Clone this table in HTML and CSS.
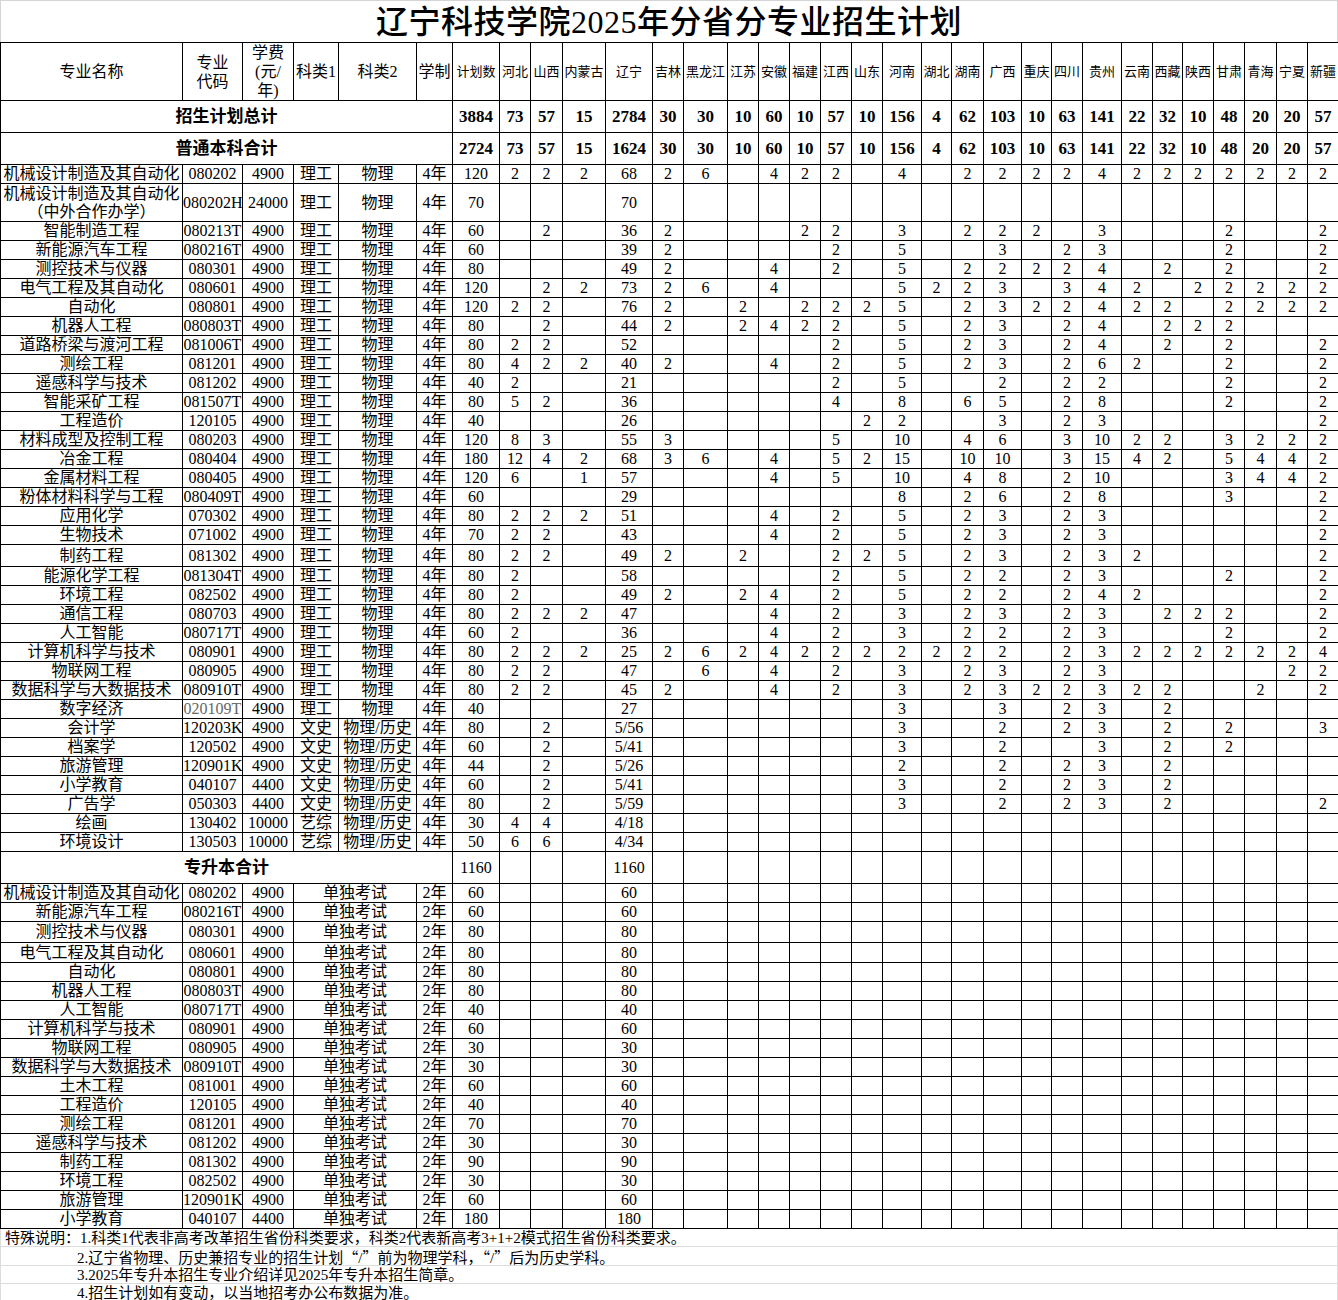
FILE: index.html
```html
<!DOCTYPE html>
<html lang="zh-CN">
<head>
<meta charset="utf-8">
<title>辽宁科技学院2025年分省分专业招生计划</title>
<link rel="stylesheet" href="styles.css">
</head>
<body>
<div class="page">
<div class="title">辽宁科技学院2025年分省分专业招生计划</div>
<table class="plan">
<colgroup>
<col class="w182"><col class="w60"><col class="w51"><col class="w45"><col class="w78"><col class="w36"><col class="w47">
<col class="w31"><col class="w32"><col class="w43"><col class="w47"><col class="w31"><col class="w44"><col class="w31"><col class="w31"><col class="w31"><col class="w31"><col class="w31">
<col class="w39"><col class="w30"><col class="w32"><col class="w38"><col class="w30"><col class="w31"><col class="w39"><col class="w31"><col class="w30"><col class="w31"><col class="w31"><col class="w32"><col class="w31"><col class="w31">
</colgroup>
<tr class="head"><th>专业名称</th><th>专业<br>代码</th><th>学费<br>(元/<br>年)</th><th>科类1</th><th>科类2</th><th>学制</th><th class="p">计划数</th><th class="p">河北</th><th class="p">山西</th><th class="p">内蒙古</th><th class="p">辽宁</th><th class="p">吉林</th><th class="p">黑龙江</th><th class="p">江苏</th><th class="p">安徽</th><th class="p">福建</th><th class="p">江西</th><th class="p">山东</th><th class="p">河南</th><th class="p">湖北</th><th class="p">湖南</th><th class="p">广西</th><th class="p">重庆</th><th class="p">四川</th><th class="p">贵州</th><th class="p">云南</th><th class="p">西藏</th><th class="p">陕西</th><th class="p">甘肃</th><th class="p">青海</th><th class="p">宁夏</th><th class="p">新疆</th></tr>
<tr class="sum"><td colspan="6" class="label">招生计划总计</td><td>3884</td><td>73</td><td>57</td><td>15</td><td>2784</td><td>30</td><td>30</td><td>10</td><td>60</td><td>10</td><td>57</td><td>10</td><td>156</td><td>4</td><td>62</td><td>103</td><td>10</td><td>63</td><td>141</td><td>22</td><td>32</td><td>10</td><td>48</td><td>20</td><td>20</td><td>57</td></tr>
<tr class="sum"><td colspan="6" class="label">普通本科合计</td><td>2724</td><td>73</td><td>57</td><td>15</td><td>1624</td><td>30</td><td>30</td><td>10</td><td>60</td><td>10</td><td>57</td><td>10</td><td>156</td><td>4</td><td>62</td><td>103</td><td>10</td><td>63</td><td>141</td><td>22</td><td>32</td><td>10</td><td>48</td><td>20</td><td>20</td><td>57</td></tr>
<tr><td>机械设计制造及其自动化</td><td>080202</td><td>4900</td><td>理工</td><td>物理</td><td>4年</td><td>120</td><td>2</td><td>2</td><td>2</td><td>68</td><td>2</td><td>6</td><td></td><td>4</td><td>2</td><td>2</td><td></td><td>4</td><td></td><td>2</td><td>2</td><td>2</td><td>2</td><td>4</td><td>2</td><td>2</td><td>2</td><td>2</td><td>2</td><td>2</td><td>2</td></tr>
<tr class="two"><td>机械设计制造及其自动化<br>（中外合作办学）</td><td>080202H</td><td>24000</td><td>理工</td><td>物理</td><td>4年</td><td>70</td><td></td><td></td><td></td><td>70</td><td></td><td></td><td></td><td></td><td></td><td></td><td></td><td></td><td></td><td></td><td></td><td></td><td></td><td></td><td></td><td></td><td></td><td></td><td></td><td></td><td></td></tr>
<tr><td>智能制造工程</td><td>080213T</td><td>4900</td><td>理工</td><td>物理</td><td>4年</td><td>60</td><td></td><td>2</td><td></td><td>36</td><td>2</td><td></td><td></td><td></td><td>2</td><td>2</td><td></td><td>3</td><td></td><td>2</td><td>2</td><td>2</td><td></td><td>3</td><td></td><td></td><td></td><td>2</td><td></td><td></td><td>2</td></tr>
<tr><td>新能源汽车工程</td><td>080216T</td><td>4900</td><td>理工</td><td>物理</td><td>4年</td><td>60</td><td></td><td></td><td></td><td>39</td><td>2</td><td></td><td></td><td></td><td></td><td>2</td><td></td><td>5</td><td></td><td></td><td>3</td><td></td><td>2</td><td>3</td><td></td><td></td><td></td><td>2</td><td></td><td></td><td>2</td></tr>
<tr><td>测控技术与仪器</td><td>080301</td><td>4900</td><td>理工</td><td>物理</td><td>4年</td><td>80</td><td></td><td></td><td></td><td>49</td><td>2</td><td></td><td></td><td>4</td><td></td><td>2</td><td></td><td>5</td><td></td><td>2</td><td>2</td><td>2</td><td>2</td><td>4</td><td></td><td>2</td><td></td><td>2</td><td></td><td></td><td>2</td></tr>
<tr><td>电气工程及其自动化</td><td>080601</td><td>4900</td><td>理工</td><td>物理</td><td>4年</td><td>120</td><td></td><td>2</td><td>2</td><td>73</td><td>2</td><td>6</td><td></td><td>4</td><td></td><td></td><td></td><td>5</td><td>2</td><td>2</td><td>3</td><td></td><td>3</td><td>4</td><td>2</td><td></td><td>2</td><td>2</td><td>2</td><td>2</td><td>2</td></tr>
<tr><td>自动化</td><td>080801</td><td>4900</td><td>理工</td><td>物理</td><td>4年</td><td>120</td><td>2</td><td>2</td><td></td><td>76</td><td>2</td><td></td><td>2</td><td></td><td>2</td><td>2</td><td>2</td><td>5</td><td></td><td>2</td><td>3</td><td>2</td><td>2</td><td>4</td><td>2</td><td>2</td><td></td><td>2</td><td>2</td><td>2</td><td>2</td></tr>
<tr><td>机器人工程</td><td>080803T</td><td>4900</td><td>理工</td><td>物理</td><td>4年</td><td>80</td><td></td><td>2</td><td></td><td>44</td><td>2</td><td></td><td>2</td><td>4</td><td>2</td><td>2</td><td></td><td>5</td><td></td><td>2</td><td>3</td><td></td><td>2</td><td>4</td><td></td><td>2</td><td>2</td><td>2</td><td></td><td></td><td></td></tr>
<tr><td>道路桥梁与渡河工程</td><td>081006T</td><td>4900</td><td>理工</td><td>物理</td><td>4年</td><td>80</td><td>2</td><td>2</td><td></td><td>52</td><td></td><td></td><td></td><td></td><td></td><td>2</td><td></td><td>5</td><td></td><td>2</td><td>3</td><td></td><td>2</td><td>4</td><td></td><td>2</td><td></td><td>2</td><td></td><td></td><td>2</td></tr>
<tr><td>测绘工程</td><td>081201</td><td>4900</td><td>理工</td><td>物理</td><td>4年</td><td>80</td><td>4</td><td>2</td><td>2</td><td>40</td><td>2</td><td></td><td></td><td>4</td><td></td><td>2</td><td></td><td>5</td><td></td><td>2</td><td>3</td><td></td><td>2</td><td>6</td><td>2</td><td></td><td></td><td>2</td><td></td><td></td><td>2</td></tr>
<tr><td>遥感科学与技术</td><td>081202</td><td>4900</td><td>理工</td><td>物理</td><td>4年</td><td>40</td><td>2</td><td></td><td></td><td>21</td><td></td><td></td><td></td><td></td><td></td><td>2</td><td></td><td>5</td><td></td><td></td><td>2</td><td></td><td>2</td><td>2</td><td></td><td></td><td></td><td>2</td><td></td><td></td><td>2</td></tr>
<tr><td>智能采矿工程</td><td>081507T</td><td>4900</td><td>理工</td><td>物理</td><td>4年</td><td>80</td><td>5</td><td>2</td><td></td><td>36</td><td></td><td></td><td></td><td></td><td></td><td>4</td><td></td><td>8</td><td></td><td>6</td><td>5</td><td></td><td>2</td><td>8</td><td></td><td></td><td></td><td>2</td><td></td><td></td><td>2</td></tr>
<tr><td>工程造价</td><td>120105</td><td>4900</td><td>理工</td><td>物理</td><td>4年</td><td>40</td><td></td><td></td><td></td><td>26</td><td></td><td></td><td></td><td></td><td></td><td></td><td>2</td><td>2</td><td></td><td></td><td>3</td><td></td><td>2</td><td>3</td><td></td><td></td><td></td><td></td><td></td><td></td><td>2</td></tr>
<tr><td>材料成型及控制工程</td><td>080203</td><td>4900</td><td>理工</td><td>物理</td><td>4年</td><td>120</td><td>8</td><td>3</td><td></td><td>55</td><td>3</td><td></td><td></td><td></td><td></td><td>5</td><td></td><td>10</td><td></td><td>4</td><td>6</td><td></td><td>3</td><td>10</td><td>2</td><td>2</td><td></td><td>3</td><td>2</td><td>2</td><td>2</td></tr>
<tr><td>冶金工程</td><td>080404</td><td>4900</td><td>理工</td><td>物理</td><td>4年</td><td>180</td><td>12</td><td>4</td><td>2</td><td>68</td><td>3</td><td>6</td><td></td><td>4</td><td></td><td>5</td><td>2</td><td>15</td><td></td><td>10</td><td>10</td><td></td><td>3</td><td>15</td><td>4</td><td>2</td><td></td><td>5</td><td>4</td><td>4</td><td>2</td></tr>
<tr><td>金属材料工程</td><td>080405</td><td>4900</td><td>理工</td><td>物理</td><td>4年</td><td>120</td><td>6</td><td></td><td>1</td><td>57</td><td></td><td></td><td></td><td>4</td><td></td><td>5</td><td></td><td>10</td><td></td><td>4</td><td>8</td><td></td><td>2</td><td>10</td><td></td><td></td><td></td><td>3</td><td>4</td><td>4</td><td>2</td></tr>
<tr><td>粉体材料科学与工程</td><td>080409T</td><td>4900</td><td>理工</td><td>物理</td><td>4年</td><td>60</td><td></td><td></td><td></td><td>29</td><td></td><td></td><td></td><td></td><td></td><td></td><td></td><td>8</td><td></td><td>2</td><td>6</td><td></td><td>2</td><td>8</td><td></td><td></td><td></td><td>3</td><td></td><td></td><td>2</td></tr>
<tr><td>应用化学</td><td>070302</td><td>4900</td><td>理工</td><td>物理</td><td>4年</td><td>80</td><td>2</td><td>2</td><td>2</td><td>51</td><td></td><td></td><td></td><td>4</td><td></td><td>2</td><td></td><td>5</td><td></td><td>2</td><td>3</td><td></td><td>2</td><td>3</td><td></td><td></td><td></td><td></td><td></td><td></td><td>2</td></tr>
<tr><td>生物技术</td><td>071002</td><td>4900</td><td>理工</td><td>物理</td><td>4年</td><td>70</td><td>2</td><td>2</td><td></td><td>43</td><td></td><td></td><td></td><td>4</td><td></td><td>2</td><td></td><td>5</td><td></td><td>2</td><td>3</td><td></td><td>2</td><td>3</td><td></td><td></td><td></td><td></td><td></td><td></td><td>2</td></tr>
<tr class="tall"><td>制药工程</td><td>081302</td><td>4900</td><td>理工</td><td>物理</td><td>4年</td><td>80</td><td>2</td><td>2</td><td></td><td>49</td><td>2</td><td></td><td>2</td><td></td><td></td><td>2</td><td>2</td><td>5</td><td></td><td>2</td><td>3</td><td></td><td>2</td><td>3</td><td>2</td><td></td><td></td><td></td><td></td><td></td><td>2</td></tr>
<tr><td>能源化学工程</td><td>081304T</td><td>4900</td><td>理工</td><td>物理</td><td>4年</td><td>80</td><td>2</td><td></td><td></td><td>58</td><td></td><td></td><td></td><td></td><td></td><td>2</td><td></td><td>5</td><td></td><td>2</td><td>2</td><td></td><td>2</td><td>3</td><td></td><td></td><td></td><td>2</td><td></td><td></td><td>2</td></tr>
<tr><td>环境工程</td><td>082502</td><td>4900</td><td>理工</td><td>物理</td><td>4年</td><td>80</td><td>2</td><td></td><td></td><td>49</td><td>2</td><td></td><td>2</td><td>4</td><td></td><td>2</td><td></td><td>5</td><td></td><td>2</td><td>2</td><td></td><td>2</td><td>4</td><td>2</td><td></td><td></td><td></td><td></td><td></td><td>2</td></tr>
<tr><td>通信工程</td><td>080703</td><td>4900</td><td>理工</td><td>物理</td><td>4年</td><td>80</td><td>2</td><td>2</td><td>2</td><td>47</td><td></td><td></td><td></td><td>4</td><td></td><td>2</td><td></td><td>3</td><td></td><td>2</td><td>3</td><td></td><td>2</td><td>3</td><td></td><td>2</td><td>2</td><td>2</td><td></td><td></td><td>2</td></tr>
<tr><td>人工智能</td><td>080717T</td><td>4900</td><td>理工</td><td>物理</td><td>4年</td><td>60</td><td>2</td><td></td><td></td><td>36</td><td></td><td></td><td></td><td>4</td><td></td><td>2</td><td></td><td>3</td><td></td><td>2</td><td>2</td><td></td><td>2</td><td>3</td><td></td><td></td><td></td><td>2</td><td></td><td></td><td>2</td></tr>
<tr><td>计算机科学与技术</td><td>080901</td><td>4900</td><td>理工</td><td>物理</td><td>4年</td><td>80</td><td>2</td><td>2</td><td>2</td><td>25</td><td>2</td><td>6</td><td>2</td><td>4</td><td>2</td><td>2</td><td>2</td><td>2</td><td>2</td><td>2</td><td>2</td><td></td><td>2</td><td>3</td><td>2</td><td>2</td><td>2</td><td>2</td><td>2</td><td>2</td><td>4</td></tr>
<tr><td>物联网工程</td><td>080905</td><td>4900</td><td>理工</td><td>物理</td><td>4年</td><td>80</td><td>2</td><td>2</td><td></td><td>47</td><td></td><td>6</td><td></td><td>4</td><td></td><td>2</td><td></td><td>3</td><td></td><td>2</td><td>3</td><td></td><td>2</td><td>3</td><td></td><td></td><td></td><td></td><td></td><td>2</td><td>2</td></tr>
<tr><td>数据科学与大数据技术</td><td>080910T</td><td>4900</td><td>理工</td><td>物理</td><td>4年</td><td>80</td><td>2</td><td>2</td><td></td><td>45</td><td>2</td><td></td><td></td><td>4</td><td></td><td>2</td><td></td><td>3</td><td></td><td>2</td><td>3</td><td>2</td><td>2</td><td>3</td><td>2</td><td>2</td><td></td><td></td><td>2</td><td></td><td>2</td></tr>
<tr><td>数字经济</td><td class="muted">020109T</td><td>4900</td><td>理工</td><td>物理</td><td>4年</td><td>40</td><td></td><td></td><td></td><td>27</td><td></td><td></td><td></td><td></td><td></td><td></td><td></td><td>3</td><td></td><td></td><td>3</td><td></td><td>2</td><td>3</td><td></td><td>2</td><td></td><td></td><td></td><td></td><td></td></tr>
<tr><td>会计学</td><td>120203K</td><td>4900</td><td>文史</td><td>物理/历史</td><td>4年</td><td>80</td><td></td><td>2</td><td></td><td>5/56</td><td></td><td></td><td></td><td></td><td></td><td></td><td></td><td>3</td><td></td><td></td><td>2</td><td></td><td>2</td><td>3</td><td></td><td>2</td><td></td><td>2</td><td></td><td></td><td>3</td></tr>
<tr><td>档案学</td><td>120502</td><td>4900</td><td>文史</td><td>物理/历史</td><td>4年</td><td>60</td><td></td><td>2</td><td></td><td>5/41</td><td></td><td></td><td></td><td></td><td></td><td></td><td></td><td>3</td><td></td><td></td><td>2</td><td></td><td></td><td>3</td><td></td><td>2</td><td></td><td>2</td><td></td><td></td><td></td></tr>
<tr><td>旅游管理</td><td>120901K</td><td>4900</td><td>文史</td><td>物理/历史</td><td>4年</td><td>44</td><td></td><td>2</td><td></td><td>5/26</td><td></td><td></td><td></td><td></td><td></td><td></td><td></td><td>2</td><td></td><td></td><td>2</td><td></td><td>2</td><td>3</td><td></td><td>2</td><td></td><td></td><td></td><td></td><td></td></tr>
<tr><td>小学教育</td><td>040107</td><td>4400</td><td>文史</td><td>物理/历史</td><td>4年</td><td>60</td><td></td><td>2</td><td></td><td>5/41</td><td></td><td></td><td></td><td></td><td></td><td></td><td></td><td>3</td><td></td><td></td><td>2</td><td></td><td>2</td><td>3</td><td></td><td>2</td><td></td><td></td><td></td><td></td><td></td></tr>
<tr><td>广告学</td><td>050303</td><td>4400</td><td>文史</td><td>物理/历史</td><td>4年</td><td>80</td><td></td><td>2</td><td></td><td>5/59</td><td></td><td></td><td></td><td></td><td></td><td></td><td></td><td>3</td><td></td><td></td><td>2</td><td></td><td>2</td><td>3</td><td></td><td>2</td><td></td><td></td><td></td><td></td><td>2</td></tr>
<tr><td>绘画</td><td>130402</td><td>10000</td><td>艺综</td><td>物理/历史</td><td>4年</td><td>30</td><td>4</td><td>4</td><td></td><td>4/18</td><td></td><td></td><td></td><td></td><td></td><td></td><td></td><td></td><td></td><td></td><td></td><td></td><td></td><td></td><td></td><td></td><td></td><td></td><td></td><td></td><td></td></tr>
<tr><td>环境设计</td><td>130503</td><td>10000</td><td>艺综</td><td>物理/历史</td><td>4年</td><td>50</td><td>6</td><td>6</td><td></td><td>4/34</td><td></td><td></td><td></td><td></td><td></td><td></td><td></td><td></td><td></td><td></td><td></td><td></td><td></td><td></td><td></td><td></td><td></td><td></td><td></td><td></td><td></td></tr>
<tr class="sub"><td colspan="6" class="label">专升本合计</td><td>1160</td><td></td><td></td><td></td><td>1160</td><td></td><td></td><td></td><td></td><td></td><td></td><td></td><td></td><td></td><td></td><td></td><td></td><td></td><td></td><td></td><td></td><td></td><td></td><td></td><td></td><td></td></tr>
<tr><td>机械设计制造及其自动化</td><td>080202</td><td>4900</td><td colspan="2">单独考试</td><td>2年</td><td>60</td><td></td><td></td><td></td><td>60</td><td></td><td></td><td></td><td></td><td></td><td></td><td></td><td></td><td></td><td></td><td></td><td></td><td></td><td></td><td></td><td></td><td></td><td></td><td></td><td></td><td></td></tr>
<tr><td>新能源汽车工程</td><td>080216T</td><td>4900</td><td colspan="2">单独考试</td><td>2年</td><td>60</td><td></td><td></td><td></td><td>60</td><td></td><td></td><td></td><td></td><td></td><td></td><td></td><td></td><td></td><td></td><td></td><td></td><td></td><td></td><td></td><td></td><td></td><td></td><td></td><td></td><td></td></tr>
<tr class="h21"><td>测控技术与仪器</td><td>080301</td><td>4900</td><td colspan="2">单独考试</td><td>2年</td><td>80</td><td></td><td></td><td></td><td>80</td><td></td><td></td><td></td><td></td><td></td><td></td><td></td><td></td><td></td><td></td><td></td><td></td><td></td><td></td><td></td><td></td><td></td><td></td><td></td><td></td><td></td></tr>
<tr class="h20"><td>电气工程及其自动化</td><td>080601</td><td>4900</td><td colspan="2">单独考试</td><td>2年</td><td>80</td><td></td><td></td><td></td><td>80</td><td></td><td></td><td></td><td></td><td></td><td></td><td></td><td></td><td></td><td></td><td></td><td></td><td></td><td></td><td></td><td></td><td></td><td></td><td></td><td></td><td></td></tr>
<tr><td>自动化</td><td>080801</td><td>4900</td><td colspan="2">单独考试</td><td>2年</td><td>80</td><td></td><td></td><td></td><td>80</td><td></td><td></td><td></td><td></td><td></td><td></td><td></td><td></td><td></td><td></td><td></td><td></td><td></td><td></td><td></td><td></td><td></td><td></td><td></td><td></td><td></td></tr>
<tr><td>机器人工程</td><td>080803T</td><td>4900</td><td colspan="2">单独考试</td><td>2年</td><td>80</td><td></td><td></td><td></td><td>80</td><td></td><td></td><td></td><td></td><td></td><td></td><td></td><td></td><td></td><td></td><td></td><td></td><td></td><td></td><td></td><td></td><td></td><td></td><td></td><td></td><td></td></tr>
<tr><td>人工智能</td><td>080717T</td><td>4900</td><td colspan="2">单独考试</td><td>2年</td><td>40</td><td></td><td></td><td></td><td>40</td><td></td><td></td><td></td><td></td><td></td><td></td><td></td><td></td><td></td><td></td><td></td><td></td><td></td><td></td><td></td><td></td><td></td><td></td><td></td><td></td><td></td></tr>
<tr><td>计算机科学与技术</td><td>080901</td><td>4900</td><td colspan="2">单独考试</td><td>2年</td><td>60</td><td></td><td></td><td></td><td>60</td><td></td><td></td><td></td><td></td><td></td><td></td><td></td><td></td><td></td><td></td><td></td><td></td><td></td><td></td><td></td><td></td><td></td><td></td><td></td><td></td><td></td></tr>
<tr><td>物联网工程</td><td>080905</td><td>4900</td><td colspan="2">单独考试</td><td>2年</td><td>30</td><td></td><td></td><td></td><td>30</td><td></td><td></td><td></td><td></td><td></td><td></td><td></td><td></td><td></td><td></td><td></td><td></td><td></td><td></td><td></td><td></td><td></td><td></td><td></td><td></td><td></td></tr>
<tr><td>数据科学与大数据技术</td><td>080910T</td><td>4900</td><td colspan="2">单独考试</td><td>2年</td><td>30</td><td></td><td></td><td></td><td>30</td><td></td><td></td><td></td><td></td><td></td><td></td><td></td><td></td><td></td><td></td><td></td><td></td><td></td><td></td><td></td><td></td><td></td><td></td><td></td><td></td><td></td></tr>
<tr><td>土木工程</td><td>081001</td><td>4900</td><td colspan="2">单独考试</td><td>2年</td><td>60</td><td></td><td></td><td></td><td>60</td><td></td><td></td><td></td><td></td><td></td><td></td><td></td><td></td><td></td><td></td><td></td><td></td><td></td><td></td><td></td><td></td><td></td><td></td><td></td><td></td><td></td></tr>
<tr><td>工程造价</td><td>120105</td><td>4900</td><td colspan="2">单独考试</td><td>2年</td><td>40</td><td></td><td></td><td></td><td>40</td><td></td><td></td><td></td><td></td><td></td><td></td><td></td><td></td><td></td><td></td><td></td><td></td><td></td><td></td><td></td><td></td><td></td><td></td><td></td><td></td><td></td></tr>
<tr><td>测绘工程</td><td>081201</td><td>4900</td><td colspan="2">单独考试</td><td>2年</td><td>70</td><td></td><td></td><td></td><td>70</td><td></td><td></td><td></td><td></td><td></td><td></td><td></td><td></td><td></td><td></td><td></td><td></td><td></td><td></td><td></td><td></td><td></td><td></td><td></td><td></td><td></td></tr>
<tr><td>遥感科学与技术</td><td>081202</td><td>4900</td><td colspan="2">单独考试</td><td>2年</td><td>30</td><td></td><td></td><td></td><td>30</td><td></td><td></td><td></td><td></td><td></td><td></td><td></td><td></td><td></td><td></td><td></td><td></td><td></td><td></td><td></td><td></td><td></td><td></td><td></td><td></td><td></td></tr>
<tr><td>制药工程</td><td>081302</td><td>4900</td><td colspan="2">单独考试</td><td>2年</td><td>90</td><td></td><td></td><td></td><td>90</td><td></td><td></td><td></td><td></td><td></td><td></td><td></td><td></td><td></td><td></td><td></td><td></td><td></td><td></td><td></td><td></td><td></td><td></td><td></td><td></td><td></td></tr>
<tr><td>环境工程</td><td>082502</td><td>4900</td><td colspan="2">单独考试</td><td>2年</td><td>30</td><td></td><td></td><td></td><td>30</td><td></td><td></td><td></td><td></td><td></td><td></td><td></td><td></td><td></td><td></td><td></td><td></td><td></td><td></td><td></td><td></td><td></td><td></td><td></td><td></td><td></td></tr>
<tr><td>旅游管理</td><td>120901K</td><td>4900</td><td colspan="2">单独考试</td><td>2年</td><td>60</td><td></td><td></td><td></td><td>60</td><td></td><td></td><td></td><td></td><td></td><td></td><td></td><td></td><td></td><td></td><td></td><td></td><td></td><td></td><td></td><td></td><td></td><td></td><td></td><td></td><td></td></tr>
<tr><td>小学教育</td><td>040107</td><td>4400</td><td colspan="2">单独考试</td><td>2年</td><td>180</td><td></td><td></td><td></td><td>180</td><td></td><td></td><td></td><td></td><td></td><td></td><td></td><td></td><td></td><td></td><td></td><td></td><td></td><td></td><td></td><td></td><td></td><td></td><td></td><td></td><td></td></tr>
</table>
<div class="notes">
<div class="note n1">特殊说明：1.科类1代表非高考改革招生省份科类要求，科类2代表新高考3+1+2模式招生省份科类要求。</div>
<div class="note n2 indent">2.辽宁省物理、历史兼招专业的招生计划<span class="cjk">“</span>/<span class="cjk">”</span>前为物理学科，<span class="cjk">“</span>/<span class="cjk">”</span>后为历史学科。</div>
<div class="note n3 indent">3.2025年专升本招生专业介绍详见2025年专升本招生简章。</div>
<div class="note n4 indent">4.招生计划如有变动，以当地招考办公布数据为准。</div>
</div>
</div>
</body>
</html>
```

FILE: styles.css
```css
* { box-sizing: border-box; }
html, body { margin: 0; padding: 0; background: #fff; }
body {
  color: #000;
  font-family: "Liberation Serif", "Noto Sans CJK SC", serif;
}
.page { width: 1338px; }

.title {
  height: 42px;
  border: 1px solid #d4d4d4;
  border-bottom: none;
  text-align: center;
  font-size: 32px;
  font-weight: 500;
  line-height: 42px;
  letter-spacing: 0.5px;
}

table.plan {
  width: 1338px;
  border-collapse: collapse;
  table-layout: fixed;
  font-size: 16px;
}
.plan td, .plan th {
  border: 1px solid #000;
  padding: 0;
  text-align: center;
  vertical-align: middle;
  line-height: 18px;
  font-weight: 400;
  white-space: nowrap;
  overflow: hidden;
}
.plan tr { height: 19px; }
.plan tr.head { height: 57px; }
.plan tr.head th { line-height: 19px; }
.plan tr.head th.p { font-size: 13px; }
.plan tr.sum { height: 32px; }
.plan tr.sum td { font-weight: 700; font-size: 17px; }
.plan tr.sub { height: 32px; }
.plan td.label { font-weight: 700; font-size: 17px; }
.plan tr.two { height: 38px; }
.plan tr.tall { height: 22px; }
.plan tr.h21 { height: 21px; }
.plan tr.h20 { height: 20px; }
.plan td.muted { color: #666; }

.w30 { width: 30px; }
.w31 { width: 31px; }
.w32 { width: 32px; }
.w36 { width: 36px; }
.w38 { width: 38px; }
.w39 { width: 39px; }
.w43 { width: 43px; }
.w44 { width: 44px; }
.w45 { width: 45px; }
.w47 { width: 47px; }
.w51 { width: 51px; }
.w60 { width: 60px; }
.w78 { width: 78px; }
.w182 { width: 182px; }

.notes { width: 1338px; font-size: 15px; }
.note {
  height: 18px;
  line-height: 18px;
  padding-left: 4px;
  border-left: 1px solid #dcdcdc;
  border-right: 1px solid #dcdcdc;
  border-bottom: 1px solid #dcdcdc;
  white-space: nowrap;
}
.note.n2 { height: 19px; line-height: 19px; }
.note.indent { padding-left: 76px; }
.cjk { font-family: "Noto Sans CJK SC", sans-serif; }
```
